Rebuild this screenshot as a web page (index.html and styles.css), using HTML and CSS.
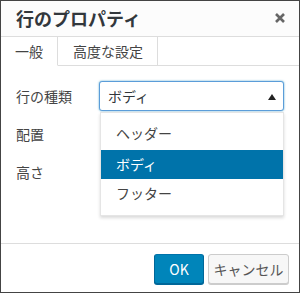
FILE: index.html
```html
<!DOCTYPE html>
<html lang="ja">
<head>
<meta charset="utf-8">
<link rel="stylesheet" href="styles.css">
</head>
<body>
<div class="dialog">
  <div class="header">
    <div class="title">行のプロパティ</div>
    <svg class="close" width="12" height="12" viewBox="0 0 12 12"><path d="M2 2 L10 10 M10 2 L2 10" stroke="#666" stroke-width="2.6" stroke-linecap="butt"/></svg>
  </div>
  <div class="tabs">
    <div class="tab active">一般</div>
    <div class="tab">高度な設定</div>
    <div class="tab-fill"></div>
  </div>
  <div class="body">
    <div class="row">
      <div class="label">行の種類</div>
      <div class="select-wrap">
        <div class="select"><span>ボディ</span><span class="arrow"></span></div>
        <ul class="menu">
          <li class="item first">ヘッダー</li>
          <li class="item selected">ボディ</li>
          <li class="item">フッター</li>
        </ul>
      </div>
    </div>
    <div class="row"><div class="label">配置</div></div>
    <div class="row"><div class="label">高さ</div></div>
  </div>
  <div class="footer">
    <button class="btn primary">OK</button>
    <button class="btn">キャンセル</button>
  </div>
</div>
</body>
</html>
```
FILE: styles.css
```css
html, body {
  margin: 0;
  padding: 0;
  background: #fff;
}
body {
  font-family: "Noto Sans CJK JP", "Noto Sans", sans-serif;
  color: #444;
}
.dialog {
  width: 300px;
  height: 293px;
  box-sizing: border-box;
  border: 1px solid #444;
  display: flex;
  flex-direction: column;
  background: #fff;
}
.header {
  height: 35px;
  flex: none;
  border-bottom: 1px solid #ddd;
  background: #fcfcfc;
  display: flex;
  align-items: center;
  justify-content: space-between;
  padding: 0 13px 0 15px;
}
.title {
  font-size: 18px;
  font-weight: bold;
  color: #32373c;
  line-height: 1;
  margin-top: -1px;
}
.close {
  display: block;
  margin-top: -1px;
}
.tabs {
  display: flex;
  height: 29px;
  flex: none;
}
.tab {
  font-size: 14px;
  line-height: 28px;
  padding: 0 14px;
  border-right: 1px solid #ddd;
  border-bottom: 1px solid #ddd;
  color: #444;
}
.tab.active {
  border-bottom-color: transparent;
}
.tab:nth-child(2) {
  padding: 0 14px 0 15px;
}
.tab-fill {
  flex: 1;
  border-bottom: 1px solid #ddd;
}
.body {
  flex: 1;
  padding: 15px 14px 0 15px;
  display: flex;
  flex-direction: column;
  gap: 8px;
}
.row {
  display: flex;
  align-items: center;
  height: 30px;
}
.label {
  width: 83px;
  font-size: 14px;
  color: #444;
}
.select-wrap {
  position: relative;
  width: 185px;
}
.select {
  box-sizing: border-box;
  height: 30px;
  border: 1px solid #5b9dd9;
  border-radius: 3px;
  box-shadow: 0 0 2px rgba(30, 140, 190, 0.8);
  display: flex;
  align-items: center;
  justify-content: space-between;
  padding: 0 7px 0 8px;
  font-size: 14px;
  color: #32373c;
  background: #fff;
}
.arrow {
  width: 0;
  height: 0;
  border-left: 4px solid transparent;
  border-right: 4px solid transparent;
  border-bottom: 6px solid #222;
  margin-top: 1px;
}
.menu {
  position: absolute;
  left: 1px;
  top: 31px;
  width: 184px;
  box-sizing: border-box;
  margin: 0;
  padding: 7px 0;
  list-style: none;
  background: #fff;
  border: 1px solid #e5e5e5;
  box-shadow: 0 2px 3px rgba(0, 0, 0, 0.15);
}
.item {
  height: 29px;
  line-height: 29px;
  padding-left: 15px;
  font-size: 14px;
  color: #444;
}
.item.first {
  height: 30px;
  line-height: 26px;
}
.item.selected {
  background: #0073aa;
  color: #fff;
}
.footer {
  flex: none;
  height: 49px;
  border-top: 1px solid #ddd;
  display: flex;
  justify-content: flex-end;
  align-items: flex-start;
  gap: 4px;
  padding: 10px 10px 0 0;
  box-sizing: border-box;
}
.btn {
  height: 30px;
  box-sizing: border-box;
  border: 1px solid #ccc;
  border-radius: 3px;
  background: #f7f7f7;
  color: #555;
  font-family: "Noto Sans CJK JP", "Noto Sans", sans-serif;
  font-size: 14px;
  padding: 0 2px;
  width: 81px;
  white-space: nowrap;
  box-shadow: 0 1px 0 #ccc;
}
.btn.primary {
  width: 50px;
  background: #0085ba;
  border-color: #0073aa #006799 #006799;
  color: #fff;
  box-shadow: 0 1px 0 #006799;
}
```
